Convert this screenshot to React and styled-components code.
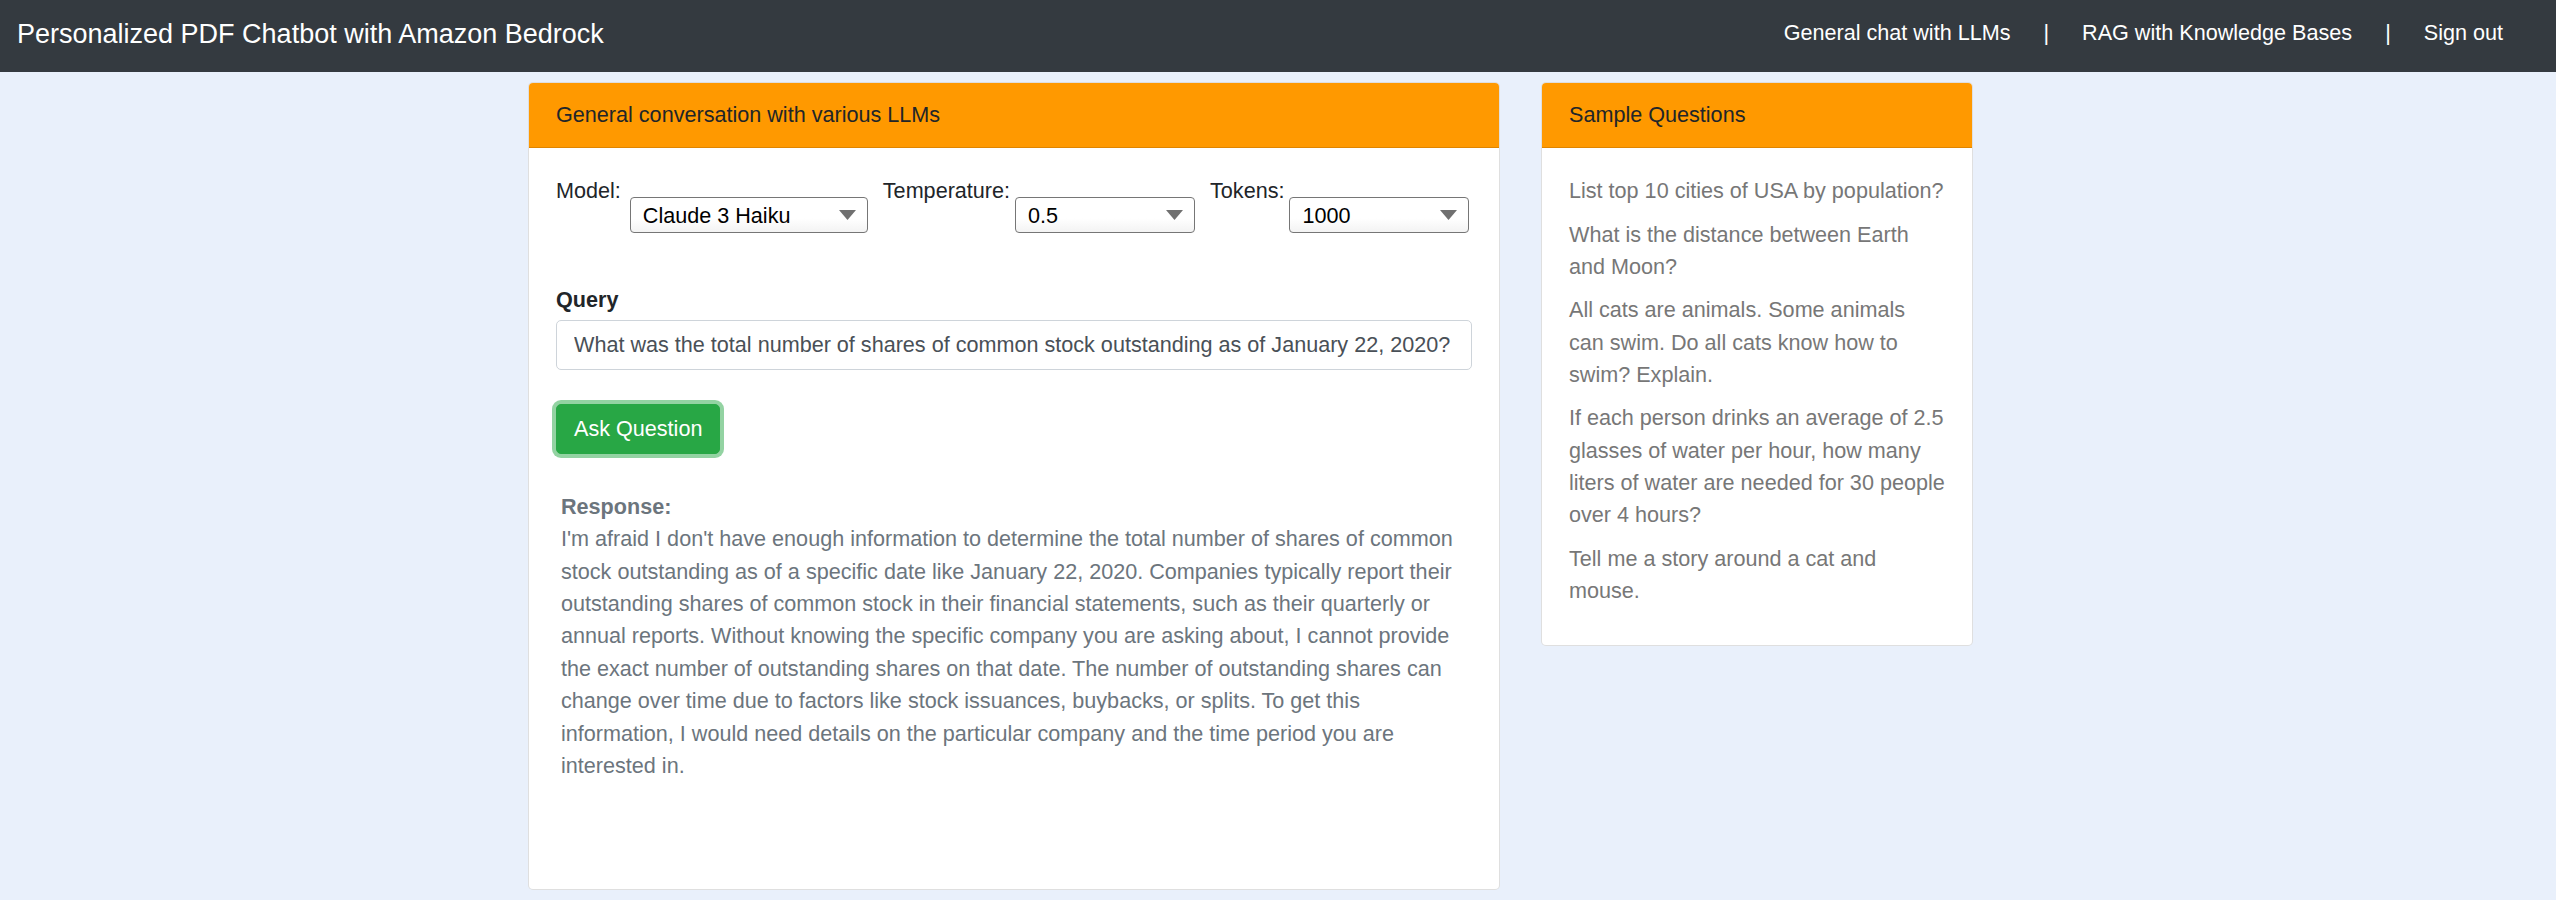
import React from 'react'
import styled, { createGlobalStyle } from 'styled-components'

const GlobalStyle = createGlobalStyle`
  html, body {
    margin: 0;
    padding: 0;
    background: #e9f0fb;
    font-family: "Liberation Sans", Arial, sans-serif;
    font-size: 21.6px;
    line-height: 32.4px;
    color: #212529;
  }
  * { box-sizing: border-box; }
`

const Navbar = styled.nav`
  height: 72px;
  background: #343a40;
  display: flex;
  align-items: center;
  justify-content: space-between;
  padding: 0 53px 5px 17px;
`

const Brand = styled.div`
  color: #fff;
  font-size: 27px;
  line-height: 40px;
`

const NavLinks = styled.div`
  display: flex;
  align-items: center;
  gap: 33px;
  color: #fff;
`

const NavLink = styled.a`
  color: #fff;
  text-decoration: none;
  cursor: pointer;
`

const Main = styled.main`
  width: 1540px;
  margin: 10px auto 0;
  padding-left: 20px;
  display: flex;
  align-items: flex-start;
  gap: 41px;
`

const Card = styled.section`
  width: ${(p) => p.$width}px;
  background: #fff;
  border: 1px solid rgba(0, 0, 0, 0.125);
  border-radius: 5px;
  overflow: hidden;
`

const CardHeader = styled.div`
  background: #ff9900;
  padding: 16px 27px;
  border-bottom: 1px solid rgba(0, 0, 0, 0.125);
  color: #212529;
`

const CardBody = styled.div`
  padding: 27px;
  min-height: ${(p) => p.$minHeight || 0}px;
`

const ControlRow = styled.div`
  display: flex;
  align-items: flex-start;
  gap: 15px;
`

const Field = styled.label`
  display: flex;
  align-items: flex-start;
  gap: ${(p) => p.$gap}px;
`

const SelectWrap = styled.div`
  position: relative;
  margin-top: 22px;
  width: ${(p) => p.$width}px;
  height: 36px;
`

const Select = styled.select`
  appearance: none;
  -webkit-appearance: none;
  width: 100%;
  height: 100%;
  border: 1px solid #767676;
  border-radius: 4px;
  background: linear-gradient(#ffffff, #ffffff 60%, #f3f3f3);
  font-family: "Liberation Sans", Arial, sans-serif;
  font-size: 21.6px;
  color: #000;
  padding: 0 36px 0 12px;
  outline: none;
`

const Arrow = styled.svg`
  position: absolute;
  right: 12px;
  top: 13px;
  pointer-events: none;
`

const QueryLabel = styled.div`
  font-weight: bold;
  margin-top: 51px;
  margin-bottom: 3px;
`

const QueryInput = styled.input`
  display: block;
  width: 916px;
  height: 50px;
  border: 1px solid #ced4da;
  border-radius: 5px;
  padding: 0 17px;
  font-family: "Liberation Sans", Arial, sans-serif;
  font-size: 21.6px;
  color: #495057;
  outline: none;
`

const AskButton = styled.button`
  margin-top: 34px;
  height: 50px;
  padding: 0 17px;
  background: #28a745;
  border: 1px solid #28a745;
  border-radius: 5px;
  color: #fff;
  font-family: "Liberation Sans", Arial, sans-serif;
  font-size: 21.6px;
  box-shadow: 0 0 0 4px rgba(40, 167, 69, 0.5);
  cursor: pointer;
`

const Response = styled.div`
  margin-top: 37px;
  padding-left: 5px;
  color: #6c757d;
`

const ResponseTitle = styled.div`
  font-weight: bold;
`

const Question = styled.p`
  margin: 0 0 10.8px;
  color: #777;
`

const SelectField = ({ label, gap, width, value, options }) => (
  <Field $gap={gap}>
    <span>{label}</span>
    <SelectWrap $width={width}>
      <Select defaultValue={value}>
        {options.map((o) => (
          <option key={o} value={o}>{o}</option>
        ))}
      </Select>
      <Arrow width="17" height="10" viewBox="0 0 17 10">
        <polygon points="0,0 17,0 8.5,10" fill="#707070" />
      </Arrow>
    </SelectWrap>
  </Field>
)

const samples = [
  'List top 10 cities of USA by population?',
  'What is the distance between Earth and Moon?',
  'All cats are animals. Some animals can swim. Do all cats know how to swim? Explain.',
  'If each person drinks an average of 2.5 glasses of water per hour, how many liters of water are needed for 30 people over 4 hours?',
  'Tell me a story around a cat and mouse.',
]

const App = () => {
  return (
    <>
      <GlobalStyle />
      <Navbar>
        <Brand>Personalized PDF Chatbot with Amazon Bedrock</Brand>
        <NavLinks>
          <NavLink>General chat with LLMs</NavLink>
          <span>|</span>
          <NavLink>RAG with Knowledge Bases</NavLink>
          <span>|</span>
          <NavLink>Sign out</NavLink>
        </NavLinks>
      </Navbar>

      <Main>
        <Card $width={972}>
          <CardHeader>General conversation with various LLMs</CardHeader>
          <CardBody $minHeight={741}>
            <ControlRow>
              <SelectField label="Model:" gap={9} width={238} value="Claude 3 Haiku"
                options={['Claude 3 Haiku', 'Claude 3 Sonnet', 'Claude 2.1']} />
              <SelectField label="Temperature:" gap={5} width={180} value="0.5"
                options={['0.0', '0.5', '1.0']} />
              <SelectField label="Tokens:" gap={5} width={180} value="1000"
                options={['500', '1000', '2000']} />
            </ControlRow>

            <QueryLabel>Query</QueryLabel>
            <QueryInput
              defaultValue="What was the total number of shares of common stock outstanding as of January 22, 2020?"
            />
            <AskButton>Ask Question</AskButton>

            <Response>
              <ResponseTitle>Response:</ResponseTitle>
              I'm afraid I don't have enough information to determine the total number of shares of common stock outstanding as of a specific date like January 22, 2020. Companies typically report their outstanding shares of common stock in their financial statements, such as their quarterly or annual reports. Without knowing the specific company you are asking about, I cannot provide the exact number of outstanding shares on that date. The number of outstanding shares can change over time due to factors like stock issuances, buybacks, or splits. To get this information, I would need details on the particular company and the time period you are interested in.
            </Response>
          </CardBody>
        </Card>

        <Card $width={432}>
          <CardHeader>Sample Questions</CardHeader>
          <CardBody>
            {samples.map((q) => (
              <Question key={q}>{q}</Question>
            ))}
          </CardBody>
        </Card>
      </Main>
    </>
  )
}

export default App
